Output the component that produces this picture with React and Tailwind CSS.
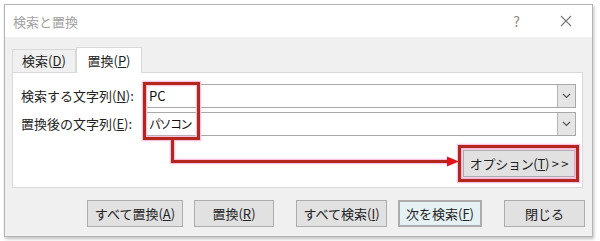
import React from 'react';

const font = { fontFamily: '"Noto Sans CJK JP", "Noto Sans", sans-serif' };

const Btn = ({ children, className = '' }) => (
    <div className={`h-[27px] flex items-center justify-center bg-[#e1e1e1] border border-[#adadad] text-[13px] text-[#222] ${className}`}>
        {children}
    </div>
);

const Combo = ({ value, tight }) => (
    <div className="flex-1 h-[24px] flex bg-white border border-[#a9a9a9]">
        <div className={`flex-1 pl-[3px] flex items-center text-[#111] ${tight ? 'text-[12px] tracking-[-1.5px]' : 'text-[13px]'}`}>{value}</div>
        <div className="w-[18px] flex items-center justify-center bg-[#e5e5e5] border-l border-[#b5b5b5]">
            <svg width="9" height="6" viewBox="0 0 9 6">
                <path d="M1 1l3.5 3.5L8 1" fill="none" stroke="#555" strokeWidth="1.2" />
            </svg>
        </div>
    </div>
);

const Annotation = () => (
    <svg className="absolute left-0 top-0 pointer-events-none" width="600" height="241" viewBox="0 0 600 241">
        <g fill="none" stroke="#f7c4e4" strokeWidth="5.5">
            <rect x="144.5" y="83.5" width="54" height="55" />
            <path d="M172.5 140V161.5H450" />
            <rect x="459.5" y="146.5" width="118" height="34" />
        </g>
        <g fill="none" stroke="#b3281a" strokeWidth="3">
            <rect x="144.5" y="83.5" width="54" height="55" />
            <path d="M172.5 140V161.5H449" />
            <rect x="459.5" y="146.5" width="118" height="34" />
        </g>
        <rect x="462" y="149" width="113" height="29" fill="none" stroke="#f4a8d4" strokeWidth="1" />
        <polygon points="447,156.5 459,161.5 447,166.5" fill="#e0141a" />
    </svg>
);

export default function App() {
    return (
        <div className="relative w-[600px] h-[241px] bg-white pl-[4px] pt-[4px]" style={font}>
            <div className="w-[589px] h-[233px] flex flex-col border border-[#b4b4b4] shadow-[1px_2px_3px_rgba(0,0,0,0.25)]">
                {/* title bar */}
                <div className="h-[32px] flex items-center bg-white">
                    <span className="pl-[8px] pt-[1px] text-[13px] text-[#a0a0a0]">検索と置換</span>
                    <span className="ml-auto mr-[40px] text-[14px] text-[#888]">?</span>
                    <svg className="mr-[20px]" width="12" height="12" viewBox="0 0 12 12">
                        <path d="M1 1l10 10M11 1L1 11" stroke="#777" strokeWidth="1.1" />
                    </svg>
                </div>

                {/* body */}
                <div className="flex-1 flex flex-col bg-[#f0f0f0]">
                    <div className="flex items-end pl-[7px] pt-[10px]">
                        <div className="w-[64px] h-[23px] flex items-center justify-center bg-[#f0f0f0] border border-b-0 border-[#d9d9d9] text-[13px] text-[#222]">
                            検索(<u>D</u>)
                        </div>
                        <div className="relative z-10 mb-[-1px] w-[66px] h-[26px] flex items-center justify-center bg-white border border-b-0 border-[#d9d9d9] text-[13px] text-[#222]">
                            置換(<u>P</u>)
                        </div>
                    </div>

                    <div className="ml-[7px] w-[571px] h-[116px] flex flex-col bg-white border border-[#d9d9d9] pt-[11px] pl-[8px] pr-[6px]">
                        <div className="flex items-center">
                            <div className="w-[124px] text-[13px] text-[#222]">検索する文字列(<u>N</u>):</div>
                            <Combo value="PC" />
                        </div>
                        <div className="flex items-center mt-[4px]">
                            <div className="w-[124px] text-[13px] text-[#222]">置換後の文字列(<u>E</u>):</div>
                            <Combo value="パソコン" tight />
                        </div>
                        <div className="flex justify-end mt-[14px] pr-[1px]">
                            <Btn className="w-[112px] h-[26px] tracking-[-0.3px]">オプション(<u>T</u>) &gt; &gt;</Btn>
                        </div>
                    </div>

                    <div className="flex pl-[82px] mt-[12px]">
                        <Btn className="w-[96px]">すべて置換(<u>A</u>)</Btn>
                        <Btn className="w-[80px] ml-[11px]">置換(<u>R</u>)</Btn>
                        <Btn className="w-[91px] ml-[22px]">すべて検索(<u>I</u>)</Btn>
                        <Btn className="w-[84px] ml-[11px] bg-[#e5f1f3] border-2 border-[#3a5fd0]">次を検索(<u>F</u>)</Btn>
                        <Btn className="w-[81px] ml-[22px]">閉じる</Btn>
                    </div>
                </div>
            </div>
            <Annotation />
        </div>
    );
}
